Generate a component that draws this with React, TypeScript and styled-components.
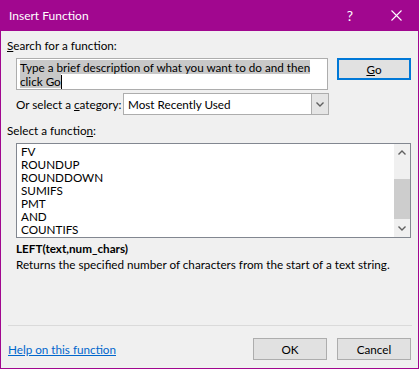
import React from 'react';
import styled, { createGlobalStyle } from 'styled-components';

const Global = createGlobalStyle`
    html, body {
        margin: 0;
        padding: 0;
        background: #f0f0f0;
    }
    body {
        font-family: Lato, "Noto Sans", "Liberation Sans", sans-serif;
        font-size: 11.7px;
        color: #000;
    }
`;

const Window = styled.div`
    width: 419px;
    height: 369px;
    box-sizing: border-box;
    border: 1px solid #a1078f;
    border-top: none;
    background: #f0f0f0;
    display: flex;
    flex-direction: column;
    overflow: hidden;
`;

const TitleBar = styled.div`
    height: 31px;
    flex-shrink: 0;
    margin: 0 -1px;
    background: #a1078f;
    color: #fff;
    display: flex;
    align-items: center;
    padding-left: 9px;
    font-size: 12px;
`;

const TitleText = styled.span`
    flex: 1;
`;

const TitleButton = styled.span`
    width: 46px;
    height: 31px;
    display: flex;
    align-items: center;
    justify-content: center;
    font-size: 14px;
`;

const Body = styled.div`
    flex: 1;
    display: flex;
    flex-direction: column;
    padding: 0 7px 0 6px;
`;

const Label = styled.div<{ $top: number }>`
    margin-top: ${p => p.$top}px;
    height: 16px;
    line-height: 16px;
    white-space: nowrap;
`;

const Key = styled.span`
    text-decoration: underline;
`;

const Row = styled.div<{ $top: number }>`
    display: flex;
    align-items: flex-start;
    margin-top: ${p => p.$top}px;
    margin-left: 9px;
`;

const SearchBox = styled.div`
    width: 312px;
    height: 32px;
    box-sizing: border-box;
    border: 1px solid #adadad;
    background: #fff;
    padding: 1px 0 0 3px;
    line-height: 14px;
    white-space: nowrap;
    overflow: hidden;
`;

const Selected = styled.span`
    background: #c8c8c8;
`;

const Caret = styled.span`
    display: inline-block;
    width: 1px;
    height: 14px;
    background: #000;
    vertical-align: -3px;
`;

const Button = styled.button<{ $focus?: boolean }>`
    width: 74px;
    height: 22px;
    box-sizing: border-box;
    border: ${p => (p.$focus ? '2px solid #0078d7' : '1px solid #adadad')};
    background: #e1e1e1;
    font: inherit;
    color: #000;
    padding: 0;
    display: flex;
    align-items: center;
    justify-content: center;
`;

const GoWrap = styled.div`
    margin-left: 9px;
`;

const CategoryRow = styled.div`
    display: flex;
    align-items: center;
    margin-top: 3px;
    margin-left: 9px;
    height: 22px;
`;

const CategoryLabel = styled.span`
    width: 107px;
    white-space: nowrap;
`;

const Select = styled.div`
    width: 206px;
    height: 22px;
    box-sizing: border-box;
    border: 1px solid #adadad;
    background: #fff;
    display: flex;
    align-items: center;
`;

const SelectValue = styled.span`
    flex: 1;
    padding-left: 4px;
    white-space: nowrap;
`;

const DropButton = styled.span`
    width: 17px;
    height: 20px;
    box-sizing: border-box;
    border-left: 1px solid #adadad;
    background: #e5e5e5;
    display: flex;
    align-items: center;
    justify-content: center;
`;

const ListBox = styled.div`
    margin-top: 5px;
    margin-left: 9px;
    width: 395px;
    height: 95px;
    flex-shrink: 0;
    box-sizing: border-box;
    border: 1px solid #828790;
    background: #fff;
    display: flex;
`;

const Items = styled.div`
    flex: 1;
    padding: 1px 0 0 4px;
    overflow: hidden;
`;

const Item = styled.div`
    line-height: 13px;
    height: 13px;
    white-space: nowrap;
`;

const ScrollBar = styled.div`
    width: 16px;
    background: #f0f0f0;
    display: flex;
    flex-direction: column;
    align-items: stretch;
`;

const ScrollArrow = styled.div`
    height: 17px;
    display: flex;
    align-items: center;
    justify-content: center;
`;

const ScrollTrack = styled.div`
    flex: 1;
    display: flex;
    flex-direction: column;
    padding-top: 18px;
`;

const Thumb = styled.div`
    height: 40px;
    background: #cdcdcd;
`;

const Syntax = styled.div`
    margin-top: 2px;
    margin-left: 9px;
    font-weight: bold;
    height: 16px;
    line-height: 16px;
`;

const Description = styled.div`
    margin-left: 9px;
    height: 16px;
    line-height: 16px;
    white-space: nowrap;
`;

const Separator = styled.div`
    margin-top: 53px;
    height: 1px;
    flex-shrink: 0;
    background: #dadada;
    margin-left: 1px;
    margin-right: -1px;
`;

const Footer = styled.div`
    display: flex;
    align-items: center;
    margin-top: 12px;
    margin-left: 1px;
`;

const HelpLink = styled.a`
    flex: 1;
    color: #0066cc;
    text-decoration: underline;
    cursor: pointer;
`;

const FooterButtons = styled.div`
    display: flex;
    gap: 10px;
`;

const Chevron = ({ up }: { up?: boolean }) => (
    <svg width="8" height="5" viewBox="0 0 8 5">
        <polyline
            points={up ? '0.5,4.5 4,1 7.5,4.5' : '0.5,0.5 4,4 7.5,0.5'}
            fill="none"
            stroke="#606060"
            strokeWidth="1.4"
        />
    </svg>
);

const Close = () => (
    <svg width="11" height="11" viewBox="0 0 11 11">
        <path d="M0.5 0.5 L10.5 10.5 M10.5 0.5 L0.5 10.5" stroke="#fff" strokeWidth="1.1" />
    </svg>
);

const functions = ['FV', 'ROUNDUP', 'ROUNDDOWN', 'SUMIFS', 'PMT', 'AND', 'COUNTIFS'];

const App = () => (
    <>
        <Global />
        <Window>
            <TitleBar>
                <TitleText>Insert Function</TitleText>
                <TitleButton>?</TitleButton>
                <TitleButton><Close /></TitleButton>
            </TitleBar>
            <Body>
                <Label $top={6}><Key>S</Key>earch for a function:</Label>
                <Row $top={5}>
                    <SearchBox>
                        <Selected>Type a brief description of what you want to do and then </Selected>
                        <br />
                        <Selected>click Go</Selected><Caret />
                    </SearchBox>
                    <GoWrap>
                        <Button $focus><Key>G</Key>o</Button>
                    </GoWrap>
                </Row>
                <CategoryRow>
                    <CategoryLabel>Or select a <Key>c</Key>ategory:</CategoryLabel>
                    <Select>
                        <SelectValue>Most Recently Used</SelectValue>
                        <DropButton><Chevron /></DropButton>
                    </Select>
                </CategoryRow>
                <Label $top={7}>Select a functio<Key>n</Key>:</Label>
                <ListBox>
                    <Items>
                        {functions.map(f => <Item key={f}>{f}</Item>)}
                    </Items>
                    <ScrollBar>
                        <ScrollArrow><Chevron up /></ScrollArrow>
                        <ScrollTrack><Thumb /></ScrollTrack>
                        <ScrollArrow><Chevron /></ScrollArrow>
                    </ScrollBar>
                </ListBox>
                <Syntax>LEFT(text,num_chars)</Syntax>
                <Description>Returns the specified number of characters from the start of a text string.</Description>
                <Separator />
                <Footer>
                    <HelpLink>Help on this function</HelpLink>
                    <FooterButtons>
                        <Button>OK</Button>
                        <Button>Cancel</Button>
                    </FooterButtons>
                </Footer>
            </Body>
        </Window>
    </>
);

export default App;
